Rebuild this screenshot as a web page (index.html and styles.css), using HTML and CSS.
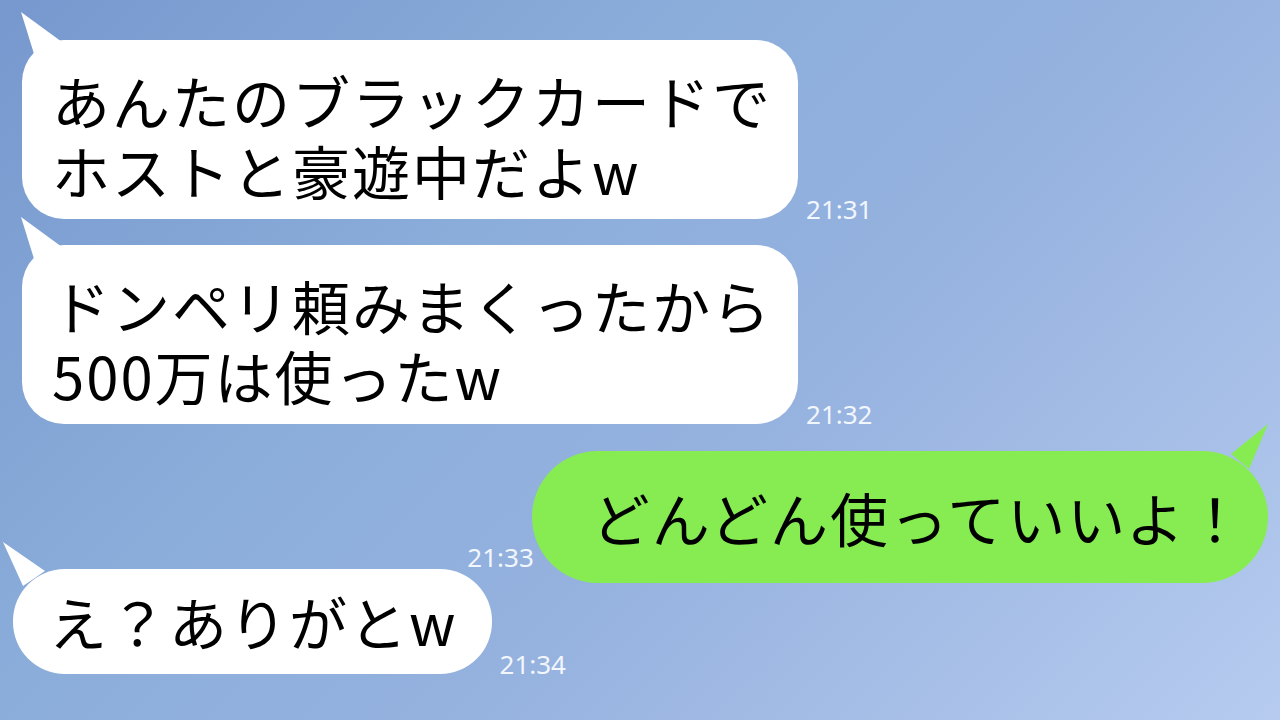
FILE: index.html
```html
<!DOCTYPE html>
<html lang="ja">
<head>
    <meta charset="UTF-8">
    <meta name="viewport" content="width=device-width, initial-scale=1.0">
    <title>トーク</title>
    <link rel="stylesheet" href="styles.css">
</head>
<body>
    <div class="chat">
        <div class="row left first">
            <div class="bubble white">
                <div class="line">あんたのブラックカードで</div>
                <div class="line">ホストと豪遊中だよw</div>
            </div>
            <span class="time">21:31</span>
        </div>

        <div class="row left second">
            <div class="bubble white">
                <div class="line">ドンペリ頼みまくったから</div>
                <div class="line">500万は使ったw</div>
            </div>
            <span class="time">21:32</span>
        </div>

        <div class="row right third">
            <span class="time">21:33</span>
            <div class="bubble green">どんどん使っていいよ！</div>
        </div>

        <div class="row left fourth">
            <div class="bubble white small">え？ありがとw</div>
            <span class="time">21:34</span>
        </div>
    </div>
</body>
</html>
```

FILE: styles.css
```css
body {
    margin: 0;
    width: 1280px;
    height: 720px;
    overflow: hidden;
    font-family: "Noto Sans CJK JP", "Noto Sans", sans-serif;
    background: linear-gradient(135deg, #7698ce 0%, #8badda 35%, #96b2df 60%, #b6cbef 100%);
}

.chat {
    display: flex;
    flex-direction: column;
    padding: 40px 12px 0 0;
}

.row {
    display: flex;
    align-items: flex-end;
}

.row.left {
    padding-left: 22px;
}

.row.right {
    justify-content: flex-end;
}

.second {
    margin-top: 26px;
}

.third {
    margin-top: 27px;
}

.fourth {
    margin-top: -14px;
    padding-left: 13px !important;
}

.bubble {
    position: relative;
    font-size: 58px;
    line-height: 70px;
    letter-spacing: 2px;
    color: #000;
    white-space: nowrap;
    border-radius: 42px;
}

.line {
    height: 70px;
}

.bubble::before {
    content: "";
    position: absolute;
    width: 45px;
    height: 50px;
    background: inherit;
}

.white {
    background: #fff;
    padding: 25px 26px 14px 30px;
}

.white::before {
    left: -2px;
    top: -30px;
    clip-path: polygon(1px 2px, 42px 32px, 15px 47px);
}

.small {
    padding: 17px 34px 18px 36px;
    border-radius: 52px;
}

.small::before {
    left: -11px;
    top: -29px;
    clip-path: polygon(1px 2px, 43px 31px, 21px 46px);
}

.green {
    background: #86ec52;
    padding: 31px 22px 31px 60px;
    border-radius: 66px;
}

.green::before {
    right: -1px;
    left: auto;
    top: -28px;
    width: 40px;
    clip-path: polygon(39px 1px, 2px 31px, 20px 46px);
}

.time {
    font-family: "Noto Sans", "DejaVu Sans", sans-serif;
    font-size: 26px;
    line-height: 28px;
    color: #f2f6fd;
    margin-left: 8px;
    margin-bottom: -4px;
}

.third .time {
    margin-left: 0;
    margin-right: -2px;
    margin-bottom: 12px;
}
```
